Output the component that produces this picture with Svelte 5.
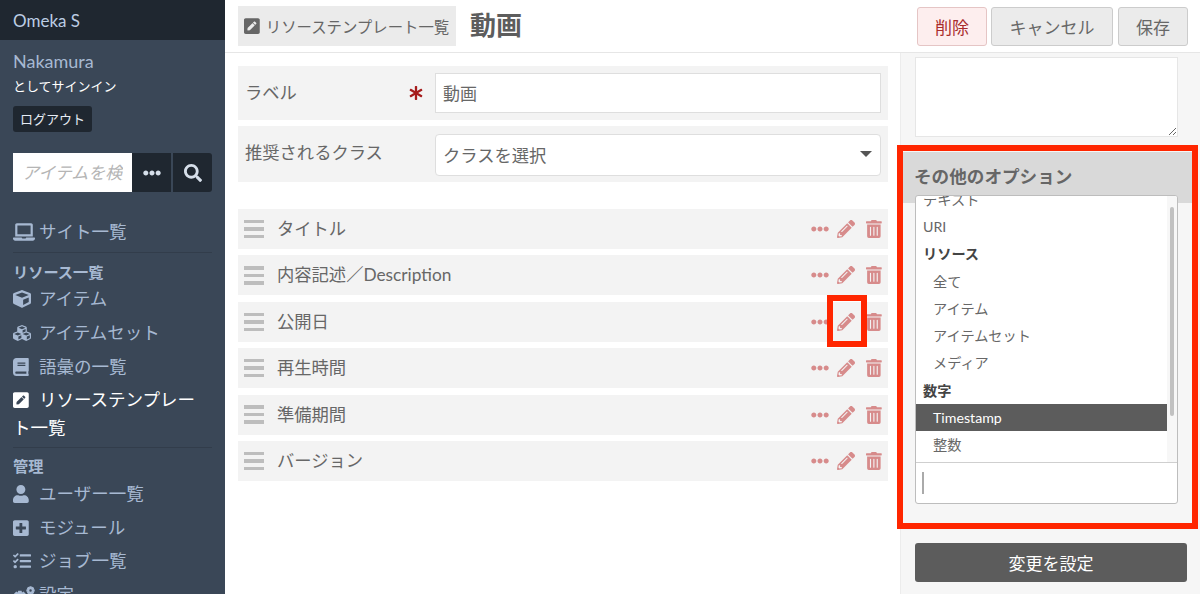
<script>
  const I = {
    pencil: [512, "M497.9 142.1l-46.1 46.1c-4.7 4.7-12.3 4.7-17 0l-111-111c-4.7-4.7-4.7-12.3 0-17l46.1-46.1c18.7-18.7 49.1-18.7 67.9 0l60.1 60.1c18.8 18.7 18.8 49.1 0 67.9zM284.2 99.8L21.6 362.4.4 483.9c-2.9 16.4 11.4 30.6 27.8 27.8l121.5-21.3 262.6-262.6c4.7-4.7 4.7-12.3 0-17l-111-111c-4.8-4.7-12.4-4.7-17.1 0zM124.1 339.9c-5.5-5.5-5.5-14.3 0-19.8l154-154c5.5-5.5 14.3-5.5 19.8 0s5.5 14.3 0 19.8l-154 154c-5.5 5.5-14.3 5.5-19.8 0zM88 424h48v36.3l-64.5 11.3-31.1-31.1L51.7 376H88v48z"],
    trash: [448, "M32 464a48 48 0 0 0 48 48h288a48 48 0 0 0 48-48V128H32zm272-256a16 16 0 0 1 32 0v224a16 16 0 0 1-32 0zm-96 0a16 16 0 0 1 32 0v224a16 16 0 0 1-32 0zm-96 0a16 16 0 0 1 32 0v224a16 16 0 0 1-32 0zM432 32H312l-9.4-18.7A24 24 0 0 0 281.1 0H166.8a23.72 23.72 0 0 0-21.4 13.3L136 32H16A16 16 0 0 0 0 48v32a16 16 0 0 0 16 16h416a16 16 0 0 0 16-16V48a16 16 0 0 0-16-16z"],
    dots: [512, "M328 256c0 39.8-32.2 72-72 72s-72-32.2-72-72 32.2-72 72-72 72 32.2 72 72zm104-72c-39.8 0-72 32.2-72 72s32.2 72 72 72 72-32.2 72-72-32.2-72-72-72zm-352 0c-39.8 0-72 32.2-72 72s32.2 72 72 72 72-32.2 72-72-32.2-72-72-72z"],
    search: [512, "M505 442.7L405.3 343c-4.5-4.5-10.6-7-17-7H372c27.6-35.3 44-79.7 44-128C416 93.1 322.9 0 208 0S0 93.1 0 208s93.1 208 208 208c48.3 0 92.7-16.4 128-44v16.3c0 6.4 2.5 12.5 7 17l99.7 99.7c9.4 9.4 24.6 9.4 33.9 0l28.3-28.3c9.4-9.4 9.4-24.6.1-34zM208 336c-70.7 0-128-57.2-128-128 0-70.7 57.2-128 128-128 70.7 0 128 57.2 128 128 0 70.7-57.2 128-128 128z"],
    laptop: [640, "M624 416H381.54c-.74 19.81-14.71 32-32.74 32H288c-18.69 0-33.02-17.47-32.77-32H16c-8.8 0-16 7.2-16 16v16c0 35.2 28.8 64 64 64h512c35.2 0 64-28.8 64-64v-16c0-8.8-7.2-16-16-16zM576 48c0-26.4-21.6-48-48-48H112C85.6 0 64 21.6 64 48v336h512V48zm-64 272H128V64h384v256z"],
    cube: [512, "M239.1 6.3l-208 78c-18.7 7-31.1 25-31.1 45v225.1c0 18.2 10.3 34.8 26.5 42.9l208 104c13.5 6.8 29.4 6.8 42.9 0l208-104c16.3-8.1 26.5-24.8 26.5-42.9V129.3c0-20-12.4-37.9-31.1-44.9l-208-78C262 2.2 250 2.2 239.1 6.3zM256 68.4l192 72v1.1l-192 78-192-78v-1.1l192-72zm32 356V275.5l160-65v133.9l-160 80z"],
    cubes: [512, "M488.6 250.2L392 214V105.5c0-15-9.3-28.4-23.4-33.7l-100-37.5c-8.1-3.1-17.1-3.1-25.3 0l-100 37.5c-14.1 5.3-23.4 18.7-23.4 33.7V214l-96.6 36.2C9.3 255.5 0 268.9 0 283.9V394c0 13.6 7.7 26.1 19.9 32.2l100 50c10.1 5.1 22.1 5.1 32.2 0l103.9-52 103.9 52c10.1 5.1 22.1 5.1 32.2 0l100-50c12.2-6.1 19.9-18.6 19.9-32.2V283.9c0-15-9.3-28.4-23.4-33.7zM358 214.8l-85 31.9v-68.2l85-37v73.3zM154 104.1l102-38.2 102 38.2v.6l-102 41.4-102-41.4v-.6zm84 291.1l-85 42.5v-79.1l85-38.8v75.4zm0-112l-102 41.4-102-41.4v-.6l102-38.2 102 38.2v.6zm240 112l-85 42.5v-79.1l85-38.8v75.4zm0-112l-102 41.4-102-41.4v-.6l102-38.2 102 38.2v.6z"],
    book: [448, "M448 360V24c0-13.3-10.7-24-24-24H96C43 0 0 43 0 96v320c0 53 43 96 96 96h328c13.3 0 24-10.7 24-24v-16c0-7.5-3.5-14.3-8.9-18.7-4.2-15.4-4.2-59.3 0-74.7 5.4-4.3 8.9-11.1 8.9-18.6zM128 134c0-3.3 2.7-6 6-6h212c3.3 0 6 2.7 6 6v20c0 3.3-2.7 6-6 6H134c-3.3 0-6-2.7-6-6v-20zm0 64c0-3.3 2.7-6 6-6h212c3.3 0 6 2.7 6 6v20c0 3.3-2.7 6-6 6H134c-3.3 0-6-2.7-6-6v-20zm253.4 250H96c-17.7 0-32-14.3-32-32 0-17.6 14.4-32 32-32h285.4c-1.9 17.1-1.9 46.9 0 64z"],
    pensq: [448, "M400 480H48c-26.5 0-48-21.5-48-48V80c0-26.5 21.5-48 48-48h352c26.5 0 48 21.5 48 48v352c0 26.5-21.5 48-48 48zM238.1 177.9L102.4 313.6l-6.3 57.1c-.8 7.6 5.6 14.1 13.3 13.3l57.1-6.3L302.2 242c2.3-2.3 2.3-6.1 0-8.5L246.7 178c-2.5-2.4-6.3-2.4-8.6-.1zM345 165.1L314.9 135c-9.4-9.4-24.6-9.4-33.9 0l-23.1 23.1c-2.3 2.3-2.3 6.1 0 8.5l55.5 55.5c2.3 2.3 6.1 2.3 8.5 0L345 199c9.3-9.3 9.3-24.5 0-33.9z"],
    user: [448, "M224 256c70.7 0 128-57.3 128-128S294.7 0 224 0 96 57.3 96 128s57.3 128 128 128zm89.6 32h-16.7c-22.2 10.2-46.9 16-72.9 16s-50.6-5.8-72.9-16h-16.7C60.2 288 0 348.2 0 422.4V464c0 26.5 21.5 48 48 48h352c26.5 0 48-21.5 48-48v-41.6c0-74.2-60.2-134.4-134.4-134.4z"],
    plus: [448, "M400 32H48C21.5 32 0 53.5 0 80v352c0 26.5 21.5 48 48 48h352c26.5 0 48-21.5 48-48V80c0-26.5-21.5-48-48-48zm-32 252c0 6.6-5.4 12-12 12h-92v92c0 6.6-5.4 12-12 12h-56c-6.6 0-12-5.4-12-12v-92H92c-6.6 0-12-5.4-12-12v-56c0-6.6 5.4-12 12-12h92v-92c0-6.6 5.4-12 12-12h56c6.6 0 12 5.4 12 12v92h92c6.6 0 12 5.4 12 12v56z"],
    tasks: [512, "M139.61 35.5a12 12 0 0 0-17 0L58.93 98.81l-22.7-22.12a12 12 0 0 0-17 0L3.53 92.41a12 12 0 0 0 0 17l47.59 47.4a12.78 12.78 0 0 0 17.61 0l15.59-15.62L156.52 69a12.09 12.09 0 0 0 .09-17zm0 159.19a12 12 0 0 0-17 0l-63.68 63.72-22.7-22.1a12 12 0 0 0-17 0L3.53 252a12 12 0 0 0 0 17L51 316.5a12.77 12.77 0 0 0 17.6 0l15.7-15.69 72.2-72.22a12 12 0 0 0 .09-16.9zM64 368c-26.49 0-48.59 21.5-48.59 48S37.53 464 64 464a48 48 0 0 0 0-96zm432 16H208a16 16 0 0 0-16 16v32a16 16 0 0 0 16 16h288a16 16 0 0 0 16-16v-32a16 16 0 0 0-16-16zm0-320H208a16 16 0 0 0-16 16v32a16 16 0 0 0 16 16h288a16 16 0 0 0 16-16V80a16 16 0 0 0-16-16zm0 160H208a16 16 0 0 0-16 16v32a16 16 0 0 0 16 16h288a16 16 0 0 0 16-16v-32a16 16 0 0 0-16-16z"],
    asterisk: [512, "M478.21 334.093L336 256l142.21-78.093c11.795-6.477 15.961-21.384 9.232-33.037l-19.48-33.741c-6.728-11.653-21.72-15.499-33.227-8.523L296 186.718l3.475-162.204C299.763 11.061 288.937 0 275.48 0h-38.96c-13.456 0-24.283 11.061-23.994 24.514L216 186.718 77.265 102.607c-11.506-6.976-26.499-3.13-33.227 8.523l-19.48 33.741c-6.728 11.653-2.562 26.56 9.233 33.037L176 256 33.79 334.093c-11.795 6.477-15.961 21.384-9.232 33.037l19.48 33.741c6.728 11.653 21.721 15.499 33.227 8.523L216 325.282l-3.475 162.204C212.237 500.939 223.064 512 236.52 512h38.961c13.456 0 24.283-11.061 23.995-24.514L296 325.282l138.735 84.111c11.506 6.976 26.499 3.13 33.227-8.523l19.48-33.741c6.728-11.653 2.563-26.559-9.232-33.036z"],
    cogs: [640, "M150 130h100l12 50 44-26 70 70-26 44 50 12v100l-50 12 26 44-70 70-44-26-12 50H150l-12-50-44 26-70-70 26-44-50-12V280l50-12-26-44 70-70 44 26zM200 260a70 70 0 1 0 0 140 70 70 0 0 0 0-140zM480 0h60l8 30 28-12 40 40-14 28 30 8v60l-30 8 14 28-40 40-28-14-8 30h-60l-8-30-28 14-40-40 14-28-30-8V94l30-8-14-28 40-40 28 12zM510 90a36 36 0 1 0 0 72 36 36 0 0 0 0-72z"]
  };
  const group1 = [
    ["cube", "アイテム"], ["cubes", "アイテムセット"], ["book", "語彙の一覧"]
  ];
  const group2 = [
    ["user", "ユーザー一覧"], ["plus", "モジュール"], ["tasks", "ジョブ一覧"], ["cogs", "設定"]
  ];
  const rows = ["タイトル", "内容記述／Description", "公開日", "再生時間", "準備期間", "バージョン"];
  const opts = [
    ["opt", "テキスト"], ["opt", "URI"], ["grp", "リソース"], ["sub", "全て"], ["sub", "アイテム"],
    ["sub", "アイテムセット"], ["sub", "メディア"], ["grp", "数字"], ["sub sel", "Timestamp"], ["sub", "整数"]
  ];
</script>

{#snippet icon(name, cls = "")}
  <svg class={"ic " + cls} viewBox={"0 0 " + I[name][0] + " 512"} aria-hidden="true"><path d={I[name][1]} /></svg>
{/snippet}

{#snippet navItem(item)}
  <a class="nav-item" href="#top"><span class="nav-ic">{@render icon(item[0])}</span>{item[1]}</a>
{/snippet}

<div class="app">
  <nav class="side">
    <div class="brand">Omeka S</div>
    <div class="who">
      <div class="name">Nakamura</div>
      <div class="signed">としてサインイン</div>
      <button class="logout">ログアウト</button>
    </div>
    <div class="search">
      <input class="q" placeholder="アイテムを検索" />
      <button class="sbtn">{@render icon("dots")}</button>
      <button class="sbtn last">{@render icon("search", "big")}</button>
    </div>
    <div class="sec first">
      {@render navItem(["laptop", "サイト一覧"])}
    </div>
    <div class="sec">
      <div class="sec-h">リソース一覧</div>
      {#each group1 as item}
        {@render navItem(item)}
      {/each}
      <a class="nav-item active" href="#top"><span class="nav-ic">{@render icon("pensq")}</span>リソーステンプレート一覧</a>
    </div>
    <div class="sec">
      <div class="sec-h">管理</div>
      {#each group2 as item}
        {@render navItem(item)}
      {/each}
    </div>
  </nav>

  <div class="content">
    <header class="top">
      <div class="crumb">{@render icon("pensq")}<span>リソーステンプレート一覧</span></div>
      <h1>動画</h1>
      <div class="actions">
        <button class="btn del">削除</button>
        <button class="btn cancel">キャンセル</button>
        <button class="btn save">保存</button>
      </div>
    </header>

    <div class="body">
      <main class="form">
        <div class="field f1">
          <span class="lbl">ラベル</span>
          <span class="req">{@render icon("asterisk")}</span>
          <input class="txt" value="動画" />
        </div>
        <div class="field f2">
          <span class="lbl">推奨されるクラス</span>
          <div class="sel-box"><span>クラスを選択</span><i class="caret"></i></div>
        </div>
        <div class="rows">
          {#each rows as r}
            <div class="row">
              <span class="grip"><b></b><b></b><b></b></span>
              <span class="rname">{r}</span>
              <span class="tools">
                {@render icon("dots", "t-dots")}
                {@render icon("pencil", "t-pen")}
                {@render icon("trash", "t-trash")}
              </span>
            </div>
          {/each}
        </div>
      </main>

      <aside class="panel">
        <textarea class="ta"></textarea>
        <h3 class="opt-h">その他のオプション</h3>
        <div class="chosen">
          <div class="list">
            <ul>
              {#each opts as o}
                <li class={o[0]}>{o[1]}</li>
              {/each}
            </ul>
            <div class="track"><div class="thumb"></div></div>
          </div>
          <div class="find"><i class="cursor"></i></div>
        </div>
        <button class="apply">変更を設定</button>
      </aside>
    </div>
  </div>

  <div class="mark mark-a"></div>
  <div class="mark mark-b"></div>
</div>

<style>
  :global(body) { margin: 0; overflow: hidden; background: #fff; }
  .app {
    position: relative;
    display: grid;
    grid-template-columns: 225px 1fr;
    height: 594px;
    overflow: hidden;
    font-family: Lato, "Noto Sans CJK JP", sans-serif;
    color: #676767;
    font-size: 16px;
  }
  .ic { height: 1em; width: auto; fill: currentColor; display: block; }
  button, input, textarea { font-family: inherit; }

  .side { background: #3a4757; color: #a7b9d2; overflow: hidden; }
  .brand { height: 40px; line-height: 41px; background: #1f2730; padding-left: 13px; font-size: 17px; color: #bccde4; }
  .who { padding: 10px 13px 0; }
  .name { font-size: 18px; line-height: 22px; color: #a7b9d2; }
  .signed { font-size: 13px; line-height: 20px; color: #fff; margin-top: 4px; }
  .logout {
    display: block; margin-top: 10px; width: 79px; height: 26px; padding: 0 0 2px;
    background: #1f2730; border: 0; border-radius: 3px; color: #e6ecf4; font-size: 13px;
  }
  .search { display: flex; margin: 21px 13px 0; height: 39px; }
  .q {
    width: 120px; box-sizing: border-box; border: 0; background: #fff; padding: 0 9px; font-size: 17px; min-width: 0; outline: none;
  }
  .q::placeholder { color: #b5b5b5; font-style: italic; }
  .sbtn {
    width: 39px; padding: 0; border: 0; background: #1f2730; color: #d6dfea; margin-right: 2px;
    display: flex; align-items: center; justify-content: center; font-size: 18px;
  }
  .sbtn.last { margin-right: 0; border-radius: 0 3px 3px 0; }
  .sec { margin: 0 13px; border-top: 1px solid #323d4b; padding-top: 8.5px; }
  .sec.first { border-top: 0; padding: 23px 0 3.3px; margin-top: 0; }
  .sec-h { font-size: 15.2px; font-weight: 700; line-height: 20px; color: #a7b9d2; margin-bottom: 0.6px; }
  .nav-item {
    display: block; font-size: 17.5px; line-height: 27.7px; color: #a7b9d2; text-decoration: none; padding: 3px 0;
  }
  .nav-ic { display: inline-block; position: relative; width: 26px; height: 1px; }
  .nav-ic :global(.ic) { position: absolute; left: 0; bottom: -3px; height: 18px; max-width: 22px; }
  .active { color: #fff; padding-bottom: 5.3px; }

  .content { display: flex; flex-direction: column; min-width: 0; }
  .top {
    height: 52px; flex: none; border-bottom: 1px solid #e6e6e6; display: flex; align-items: flex-start;
    box-sizing: content-box; padding-left: 13px;
  }
  .crumb {
    margin-top: 6px; width: 218px; height: 40px; box-sizing: border-box; background: #ebebeb;
    display: flex; align-items: center; gap: 6px; padding-left: 6px; font-size: 15.4px; color: #666; white-space: nowrap;
  }
  .crumb :global(.ic) { font-size: 18px; }
  h1 { margin: 3px 0 0 14px; font-size: 26px; line-height: 44px; font-weight: 700; color: #5d5d5d; }
  .actions { margin-left: auto; display: flex; gap: 4px; padding: 7px 12px 0 0; }
  .btn {
    height: 39px; padding: 0; border: 1px solid #ccc; border-radius: 3px; background: #ebebeb; color: #676767; font-size: 17px;
  }
  .del { width: 70px; background: #fdeeee; border-color: #e5c5c5; color: #a92c2c; }
  .cancel { width: 122px; margin-right: 1px; }
  .save { width: 70px; }

  .body { flex: 1; display: flex; min-height: 0; }
  .form { flex: 1; min-width: 0; padding: 13px 12px 0 13px; }
  .field { display: flex; align-items: center; background: #f3f3f3; position: relative; }
  .f1 { height: 54px; }
  .f2 { height: 56px; margin-top: 6px; }
  .lbl { margin-left: 7px; font-size: 17.3px; color: #676767; position: relative; }
  .f1 .lbl { top: -2px; }
  .f2 .lbl { top: -3px; }
  .req { color: #a61c1c; font-size: 14px; position: absolute; left: 171px; top: 20px; }
  .txt {
    position: absolute; left: 197px; top: 7px; width: 446px; height: 40px; box-sizing: border-box;
    border: 1px solid #dedede; padding: 0 7px 2px; font-size: 17px; color: #676767; background: #fff; outline: none;
  }
  .sel-box {
    position: absolute; left: 197px; top: 8px; width: 446px; height: 42px; box-sizing: border-box;
    border: 1px solid #dedede; border-radius: 4px; background: #fff; padding: 0 0 2px 7px;
    display: flex; align-items: center; justify-content: space-between; font-size: 17.3px;
  }
  .caret { width: 0; height: 0; border: 6px solid transparent; border-top: 6px solid #555; border-bottom: 0; margin-right: 8px; }
  .rows { margin-top: 27px; display: flex; flex-direction: column; gap: 6.4px; }
  .row { height: 40px; background: #f3f3f3; display: flex; align-items: center; padding: 0 6px 0 6px; }
  .grip { width: 20px; display: flex; flex-direction: column; gap: 4px; }
  .grip b { height: 3.5px; background: #bdbdbd; display: block; }
  .rname { margin-left: 13px; font-size: 17.3px; line-height: 24px; color: #676767; }
  .tools { margin-left: auto; display: flex; align-items: center; color: #d78b8b; }
  .tools :global(.t-dots) { font-size: 18px; margin-right: 8px; }
  .tools :global(.t-pen) { font-size: 18px; margin-right: 11px; }
  .tools :global(.t-trash) { font-size: 18px; }

  .panel {
    width: 285px; flex: none; background: #f6f6f6; border-left: 1px solid #ececec; padding-left: 14px;
    box-sizing: content-box; overflow: hidden;
  }
  .ta {
    display: block; width: 263px; height: 80px; box-sizing: border-box; margin: 4px 0 0; border: 1px solid #e6e6e6; background: #fff; outline: none;
  }
  .opt-h {
    margin: 15px 2px 0 -14px; padding: 13px 0 0 13px; height: 51px; box-sizing: border-box; background: #d9d9d9;
    font-size: 17.6px; line-height: 24px; font-weight: 700; color: #666;
  }
  .chosen {
    position: relative; margin-top: -8px; width: 263px; height: 309px; box-sizing: border-box;
    background: #fff; border: 1px solid #bdbdbd; border-radius: 3px; overflow: hidden;
  }
  .list { height: 267px; position: relative; overflow: hidden; border-bottom: 1px solid #cfcfcf; box-sizing: border-box; }
  .list ul { list-style: none; margin: -10.4px 10px 0 0; padding: 0; }
  .list li { height: 27.3px; line-height: 27.3px; padding-left: 7px; font-size: 14.2px; color: #676767; }
  .list li.grp { font-weight: 700; color: #444; }
  .list li.sub { padding-left: 17px; }
  .list li.sel { background: #5c5c5c; color: #fff; }
  .track { position: absolute; right: 0; top: 0; bottom: 0; width: 10px; background: #f7f7f7; }
  .thumb { position: absolute; left: 3px; top: 11px; width: 4px; height: 209px; border-radius: 2px; background: #c1c1c1; }
  .find { height: 41px; position: relative; }
  .cursor { position: absolute; left: 6px; top: 9px; width: 1.5px; height: 22px; background: #aaa; display: block; }
  .apply {
    display: block; margin-top: 39px; width: 272px; height: 39px; border: 0; border-radius: 3px; background: #5c5c5c; color: #fff; font-size: 17px;
  }

  .mark { position: absolute; border: 6px solid #ff2600; box-sizing: border-box; pointer-events: none; }
  .mark-a { left: 897px; top: 145px; width: 301px; height: 384px; }
  .mark-b { left: 827px; top: 295px; width: 40px; height: 52px; }
</style>
